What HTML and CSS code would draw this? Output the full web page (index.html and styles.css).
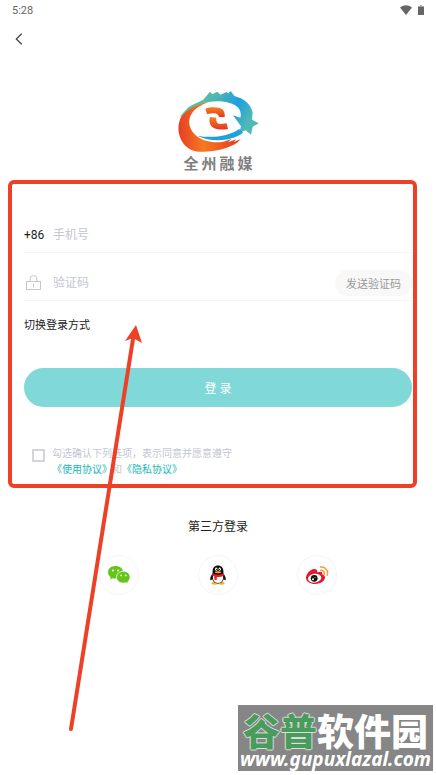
FILE: index.html
```html
<!DOCTYPE html>
<html lang="zh-CN">
<head>
  <meta charset="UTF-8">
  <meta name="viewport" content="width=device-width, initial-scale=1.0">
  <title>登录</title>
  <link rel="stylesheet" href="styles.css">
</head>
<body>
  <div class="page">
    <!-- 状态栏 -->
    <div class="status-bar">
      <span>5:28</span>
      <div class="status-icons">
        <svg width="12" height="10" viewBox="0 0 12 10"><path d="M0 2.4Q6-2 12 2.4L6 10Z" fill="#666"/></svg>
        <svg width="6" height="10" viewBox="0 0 6 10"><path d="M2 0h2v1H6v3H0V1h2z" fill="#aaa"/><path d="M0 2h6v8H0z" fill="#666"/></svg>
      </div>
    </div>

    <header class="nav">
      <button class="back" type="button" aria-label="返回">
        <svg width="8" height="12" viewBox="0 0 8 12"><path d="M6.7 .7L1.3 6l5.4 5.3" fill="none" stroke="#444" stroke-width="1.3"/></svg>
      </button>
    </header>

    <div class="brand">
      <svg width="81" height="63" viewBox="57 30 243 189">
        <defs>
          <linearGradient id="sky" x1="0" x2="1" y1="0" y2=".3">
            <stop offset="0" stop-color="#72c591"/>
            <stop offset=".45" stop-color="#4fb8ae"/>
            <stop offset=".75" stop-color="#1f9fe0"/>
            <stop offset="1" stop-color="#4fb9b4"/>
          </linearGradient>
          <linearGradient id="fire" x1="0" x2="1" y1="0" y2="0">
            <stop offset="0" stop-color="#e83d24"/>
            <stop offset=".4" stop-color="#f47a20"/>
            <stop offset="1" stop-color="#e9351f"/>
          </linearGradient>
          <linearGradient id="core" x1="0" x2="0" y1="0" y2="1">
            <stop offset="0" stop-color="#f58220"/>
            <stop offset="1" stop-color="#e7351f"/>
          </linearGradient>
        </defs>
        <path d="M68 108C57 127 55 152 64 174C75 201 98 215 122 215C163 217 207 207 236 187L245 177L224 187L232 178L207 187L218 177L193 185C160 190 132 183 112 167C89 148 84 120 100 98C111 83 130 72 152 66C120 68 85 84 68 108Z" fill="url(#fire)"/>
        <path d="M59 113L88 82L104 73L132 60L153 35L160 43L174 35L185 44L202 36L208 40L215 33L226 48C257 56 276 74 281 98L279 119L299 130L281 140L276 164L260 151L241 159L246 139L222 106L244 113C250 91 236 76 212 69C172 56 108 67 72 104Z" fill="url(#sky)"/>
        <path d="M115 167C157 175 210 170 240 147L252 158C218 184 157 188 115 167Z" fill="#1ba3df"/>
        <path d="M139 86C154 80 181 80 190 88C197 95 198 104 197 111L180 111C179 103 172 99 161 100L144 102Z" fill="url(#core)"/>
        <path d="M154 111C149 119 151 133 160 141C171 150 192 150 207 147L203 130L185 132C176 132 170 126 172 113Z" fill="url(#core)"/>
      </svg>
      <div class="brand-name">全&thinsp;州&thinsp;融&thinsp;媒</div>
    </div>

    <!-- 登录表单 -->
    <form class="login">
      <div class="field">
        <label class="field-head" for="phone">+86</label>
        <input id="phone" type="tel" placeholder="手机号">
      </div>
      <div class="field">
        <label class="field-head" for="code" aria-label="验证码">
          <svg width="18" height="16" viewBox="0 0 18 16" fill="none" stroke="#c3c5d2"><path d="M2.500 6.500h14v8h-14zM6 6.500V4a3.500 3.500 0 0 1 7 0v2.500M9.500 8.500v4"/></svg>
        </label>
        <input id="code" type="text" placeholder="验证码">
        <button class="send" type="button">发送验证码</button>
      </div>
      <button class="switch" type="button">切换登录方式</button>
      <button class="submit" type="submit">登 录</button>
      <div class="agree">
        <input id="agree" type="checkbox">
        <div>
          <label for="agree">勾选确认下列选项，表示同意并愿意遵守</label>
          <div class="links"><a href="#">《使用协议》</a>和<a href="#">《隐私协议》</a></div>
        </div>
      </div>
    </form>

    <!-- 第三方登录 -->
    <section class="social">
      <h2>第三方登录</h2>
      <div class="social-list">
        <button type="button" aria-label="微信">
          <svg width="24" height="20" viewBox="0 0 24 20">
            <path d="M8.500 1C3.800 1 1 3.900 1 7.300c0 2 1 3.700 2.700 4.900L3 14.600l2.900-1.400c.9.300 1.700.4 2.600.4 4.500 0 7.700-2.700 7.700-6.300S13 1 8.500 1z" fill="#65c51b"/>
            <path d="M16.400 6.300c-4 0-6.900 2.600-6.900 5.900 0 3.400 3 5.900 6.900 5.900.9 0 1.700-.1 2.400-.4l2.500 1.300-.6-2.200c1.500-1.100 2.400-2.700 2.400-4.600 0-3.300-2.800-5.900-6.700-5.900z" fill="#65c51b" stroke="#fff" stroke-width=".8"/>
            <g fill="#fff"><circle cx="6" cy="5.400" r="1"/><circle cx="11" cy="5.400" r="1"/><circle cx="14.200" cy="10.400" r=".9"/><circle cx="18.700" cy="10.400" r=".9"/></g>
          </svg>
        </button>
        <button type="button" aria-label="QQ">
          <svg width="18" height="20" viewBox="0 0 18 20">
            <ellipse cx="5.800" cy="18.300" rx="3.500" ry="1.400" fill="#f8ae17"/>
            <ellipse cx="12.200" cy="18.300" rx="3.500" ry="1.400" fill="#f8ae17"/>
            <path d="M9 .5C5.500.5 3.600 3 3.600 6v2.500C2 10.400.8 13 1.300 15c.3.900 1.300 0 1.900-.9C4 17 6 18.500 9 18.500s5-1.500 5.800-4.400c.6.900 1.600 1.800 1.900.9.500-2-.7-4.600-2.300-6.500V6c0-3-1.900-5.500-5.400-5.500z" fill="#111"/>
            <path d="M4 11c-.6 4 1.400 6.900 5 6.900s5.600-2.900 5-6.900z" fill="#fff"/>
            <path d="M3.400 8.300c3.600 2 7.600 2 11.200 0l.4 2.200c-2.500 1.400-5 1.600-7.200 1.400v2.900H5.300v-3.500c-.8-.2-1.500-.5-2.200-.9z" fill="#ed1c2b"/>
            <ellipse cx="7.300" cy="4.200" rx="1.200" ry="1.600" fill="#fff"/><ellipse cx="10.700" cy="4.200" rx="1.200" ry="1.600" fill="#fff"/>
            <circle cx="7.700" cy="4.400" r=".6"/><circle cx="10.300" cy="4.400" r=".6"/>
            <ellipse cx="9" cy="7.300" rx="3.200" ry="1" fill="#f8ae17"/>
          </svg>
        </button>
        <button type="button" aria-label="微博">
          <svg width="24" height="20" viewBox="0 0 24 20">
            <path d="M9 4C6 4 1 8.700 1 12.700 1 16.500 5.200 19 10 19c6.200 0 10-3.300 10-6.400 0-1.900-1.500-3-3-3.400.7-2-.2-3.400-4.800-1.900C12.700 5 11.500 4 9 4z" fill="#e6162d"/>
            <ellipse cx="9.700" cy="13.200" rx="6.700" ry="4.400" fill="#fff" transform="rotate(-8 9.700 13.200)"/>
            <circle cx="9.200" cy="13.300" r="3.400" fill="#111"/>
            <circle cx="8" cy="14.300" r="1" fill="#fff"/><circle cx="10" cy="12.500" r=".5" fill="#fff"/>
            <path d="M15.500 2a6.200 6.200 0 0 1 6.800 8M15.700 5.200a3.200 3.200 0 0 1 3.500 4" fill="none" stroke="#f79a36" stroke-width="1.500" stroke-linecap="round"/>
          </svg>
        </button>
      </div>
    </section>

    <!-- 箭头标注 -->
    <svg class="arrow" width="76" height="410" viewBox="0 0 76 410">
      <path d="M3 404L65 14" stroke="#ee4026" stroke-width="4" stroke-linecap="round"/>
      <path d="M68 0L57 16L65 13L74 18Z" fill="#ee4026"/>
    </svg>

    <!-- 水印 -->
    <div class="watermark">
      <div class="mark-name"><span>谷普</span>软件园</div>
      <div class="mark-url">www.gupuxlazal.com</div>
    </div>
  </div>
</body>
</html>
```
FILE: styles.css
```css
body {
  margin: 0;
  background: #fff;
  color: #222;
  font-family: Roboto, "Noto Sans CJK SC", sans-serif;
  font-size: 12px;
}
button, input {
  font: inherit;
  color: inherit;
  border: 0;
  padding: 0;
  background: none;
}
a {
  color: #20b7b7;
  text-decoration: none;
}
svg {
  display: block;
}
.page {
  position: relative;
  min-height: 100vh;
  box-sizing: border-box;
}
.status-bar {
  display: flex;
  align-items: center;
  justify-content: space-between;
  height: 20px;
  padding: 0 12px;
  color: #666;
  font-size: 11px;
}
.status-icons {
  display: flex;
  gap: 6px;
}
.nav {
  display: flex;
  align-items: center;
  height: 38px;
  padding: 0 15px;
}
.back {
  cursor: pointer;
}
.brand {
  display: flex;
  flex-direction: column;
  align-items: center;
  padding-top: 32px;
}
.brand-name {
  font-size: 15px;
  line-height: 22px;
  font-weight: bold;
  color: #808080;
}

/* 表单 */
.login {
  position: relative;
  margin: 5px 24px 0;
  padding: 38px 0 10px;
}
.login::after {
  content: "";
  position: absolute;
  inset: 0 -5px 0 -16px;
  border: 4px solid #ee4026;
  border-radius: 6px;
  pointer-events: none;
}
.field {
  display: flex;
  align-items: center;
  height: 34px;
  border-bottom: 1px solid #f5f5f5;
}
.field + .field {
  height: 35px;
  padding-top: 12px;
}
.field-head {
  width: 29px;
}
.field input {
  flex: 1;
  min-width: 0;
  outline: none;
}
.field input::placeholder {
  color: #c3c5d2;
}
.send {
  height: 26px;
  padding: 0 11px;
  border-radius: 13px;
  background: #f8f8f8;
  color: #999;
  font-size: 11px;
}
.switch {
  display: block;
  margin-top: 16px;
  font-size: 11px;
  line-height: 18px;
}
.submit {
  display: block;
  width: 100%;
  height: 39px;
  margin-top: 33px;
  border-radius: 20px;
  background: #80d8d8;
  color: #fff;
}
.agree {
  display: flex;
  gap: 7px;
  margin-top: 39px;
  padding-left: 8px;
  color: #c3c5d2;
  font-size: 10px;
  line-height: 16px;
}
.agree input {
  appearance: none;
  width: 13px;
  height: 13px;
  margin: 3px 0 0;
  border: 2px solid #d3d4de;
}
.agree label {
  display: block;
}

/* 第三方登录 */
.social {
  padding-top: 30px;
}
.social h2 {
  margin: 0;
  font-size: 12px;
  line-height: 18px;
  font-weight: normal;
  text-align: center;
}
.social-list {
  display: flex;
  justify-content: space-around;
  margin-top: 19px;
  padding: 0 70px;
}
.social-list button {
  display: flex;
  align-items: center;
  justify-content: center;
  width: 40px;
  height: 40px;
  border: 1px solid #f5f5f5;
  border-radius: 50%;
}

/* 标注与水印 */
.arrow {
  position: absolute;
  left: 68px;
  top: 325px;
  pointer-events: none;
}
.watermark {
  position: absolute;
  right: 3px;
  bottom: 4px;
  width: 195px;
  height: 66px;
  background: #868686;
  color: #fff;
  text-align: center;
  white-space: nowrap;
}
.mark-name {
  padding-top: 5px;
  font-family: "Noto Sans CJK SC", sans-serif;
  font-size: 37px;
  line-height: 40px;
  font-weight: 900;
}
.mark-name span {
  color: #4a9c5d;
  text-shadow: 1px 0 #ddd, -1px 0 #ddd, 0 1px #ddd, 0 -1px #ddd;
}
.mark-url {
  font-family: "Noto Sans", sans-serif;
  font-size: 19px;
  line-height: 18px;
  font-weight: bold;
  font-style: italic;
}
```
